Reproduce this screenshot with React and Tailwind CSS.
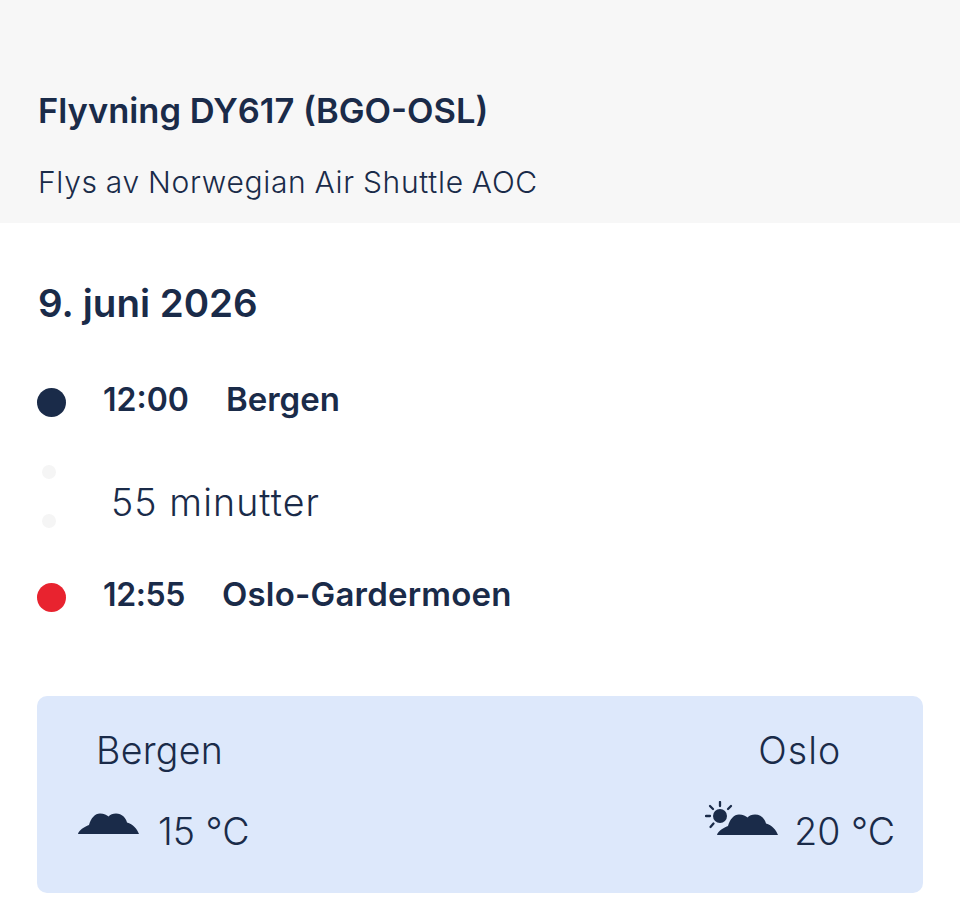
const cloudPath = "M1 21 C2 17 7 14 12 12 C14 5 18 0.5 23 0.5 C27 0.5 30 2 31.500 3.500 C33 1.500 36 0.500 39 0.500 C45 0.500 49 5 50 9.500 C56 11 60 16 62 21 Z";

const Cloud = () => (
  <svg className="mt-[11px]" width="62" height="22" viewBox="0 0 62 22" fill="#1a2b49">
    <path d={cloudPath} />
  </svg>
);

const SunCloud = () => (
  <svg className="mt-[-1px]" width="73" height="35" viewBox="0 0 73 35" fill="#1a2b49">
    <circle cx="15" cy="15" r="7" />
    <g stroke="#1a2b49" strokeWidth="2.300" strokeLinecap="round">
      <path d="M15 1v4" />
      <path d="M5 5l3 3" />
      <path d="M26 5l-3 3" />
      <path d="M1 15h4" />
      <path d="M5.500 26l3-3.500" />
    </g>
    <g transform="translate(11 13)">
      <path d={cloudPath} />
    </g>
  </svg>
);

const App = () => {
  return (
    <div className="w-[960px] h-[921px] bg-white text-[#1a2b49] overflow-hidden font-['Inter',sans-serif]">
      {/* header */}
      <div className="h-[223px] bg-[#f7f7f7] pl-[38px] pt-[89px]">
        <h1 className="text-[34.500px] leading-[44px] font-semibold">Flyvning DY617 (BGO-OSL)</h1>
        <p className="mt-[30px] text-[30px] leading-[38px] tracking-[0.7px] [word-spacing:-1px] font-[350]">Flys av Norwegian Air Shuttle AOC</p>
      </div>

      <div className="px-[37px]">
        <h2 className="mt-[56px] ml-px text-[38.500px] leading-[48px] font-semibold">9. juni 2026</h2>

        {/* route */}
        <div className="mt-[51px] flex items-center h-[44px]">
          <div className="w-[29px] h-[29px] rounded-full bg-[#1a2b49] mt-[5px]" />
          <span className="ml-[37px] text-[32px] font-semibold">12:00</span>
          <span className="ml-[37px] text-[33px] font-semibold">Bergen</span>
        </div>
        <div className="flex items-center h-[151px]">
          <div className="w-[14px] ml-[5px] flex flex-col gap-[35px] mt-[-2px]">
            <div className="w-[14px] h-[14px] rounded-full bg-[#f5f5f5]" />
            <div className="w-[14px] h-[14px] rounded-full bg-[#f5f5f5]" />
          </div>
          <span className="ml-[55px] mt-[12px] text-[37.500px] tracking-[1.1px] font-[350]">55 minutter</span>
        </div>
        <div className="flex items-center h-[44px]">
          <div className="w-[29px] h-[29px] rounded-full bg-[#e8232f] mt-[5px]" />
          <span className="ml-[37px] text-[32px] tracking-[-0.4px] font-semibold">12:55</span>
          <span className="ml-[37px] text-[33px] tracking-[0.2px] font-semibold">Oslo-Gardermoen</span>
        </div>

        {/* weather */}
        <div className="mt-[79px] h-[197px] rounded-[10px] bg-[#dde8fb] flex justify-between pl-[40px] pr-[28px] pt-[32px]">
          <div className="flex flex-col">
            <span className="ml-[19px] text-[37.500px] tracking-[0.3px] leading-[46px] font-[350]">Bergen</span>
            <div className="mt-[28px] flex items-start">
              <Cloud />
              <span className="ml-[19px] text-[37.500px] leading-[60px] font-[350]">15 °C</span>
            </div>
          </div>
          <div className="flex flex-col items-start">
            <span className="ml-[53px] text-[37.500px] tracking-[1px] leading-[46px] font-[350]">Oslo</span>
            <div className="mt-[28px] flex items-start">
              <SunCloud />
              <span className="ml-[16px] text-[37.500px] leading-[60px] font-[350]">20 °C</span>
            </div>
          </div>
        </div>
      </div>
    </div>
  );
};

export default App;
